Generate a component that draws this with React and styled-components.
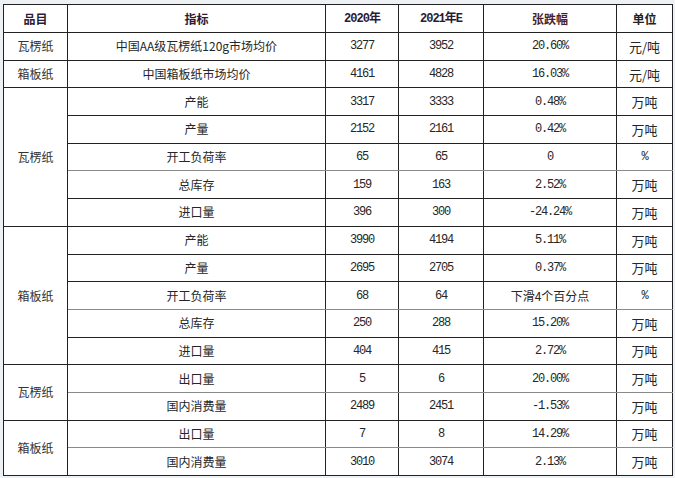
import React from "react";
import styled, { createGlobalStyle } from "styled-components";

const Global = createGlobalStyle`
  html, body { margin: 0; padding: 0; }
  body {
    background: #eef1f4;
    width: 675px;
    height: 478px;
    overflow: hidden;
    font-family: "Noto Sans CJK SC", "Liberation Sans", sans-serif;
  }
`;

const Wrap = styled.div`
  padding: 4px 0 0 3px;
`;

const Table = styled.table`
  border-collapse: collapse;
  table-layout: fixed;
  width: 669px;
  background: #fff;
  border: 1.5px solid #111;
`;

const Th = styled.th`
  height: 27px;
  border: 1px solid #222;
  font-size: 12px;
  font-weight: 700;
  color: ${(p) => p.$color || "#2b1b36"};
  font-family: ${(p) =>
    p.$mono
      ? '"Liberation Mono", "Noto Sans CJK SC", monospace'
      : '"Noto Sans CJK SC", sans-serif'};
  letter-spacing: ${(p) => (p.$mono ? "-1px" : "0")};
  text-align: center;
  padding: 0;
  line-height: 1;
`;

const Td = styled.td`
  height: 26.7px;
  border: 1px solid #222;
  border-bottom-color: ${(p) => (p.$softBottom ? "#8a8a8a" : "#222")};
  text-align: center;
  padding: 0;
  color: #262626;
  line-height: 1;
  font-size: ${(p) => (p.$unit ? "13px" : "12px")};
  font-family: ${(p) =>
    p.$mono
      ? '"Liberation Mono", "Noto Sans CJK SC", monospace'
      : '"Noto Sans CJK SC", sans-serif'};
  letter-spacing: ${(p) => (p.$mono ? "-1.2px" : "0")};
`;

const Group = styled(Td)`
  color: #333;
  font-size: 12px;
`;

const rows = [
  { g: "瓦楞纸", span: 1, name: "中国AA级瓦楞纸120g市场均价", a: "3277", b: "3952", c: "20.60%", u: "元/吨" },
  { g: "箱板纸", span: 1, name: "中国箱板纸市场均价", a: "4161", b: "4828", c: "16.03%", u: "元/吨" },
  { g: "瓦楞纸", span: 5, name: "产能", a: "3317", b: "3333", c: "0.48%", u: "万吨" },
  { name: "产量", a: "2152", b: "2161", c: "0.42%", u: "万吨" },
  { name: "开工负荷率", a: "65", b: "65", c: "0", u: "%", soft: true },
  { name: "总库存", a: "159", b: "163", c: "2.52%", u: "万吨" },
  { name: "进口量", a: "396", b: "300", c: "-24.24%", u: "万吨" },
  { g: "箱板纸", span: 5, name: "产能", a: "3990", b: "4194", c: "5.11%", u: "万吨" },
  { name: "产量", a: "2695", b: "2705", c: "0.37%", u: "万吨" },
  { name: "开工负荷率", a: "68", b: "64", c: "下滑4个百分点", u: "%", soft: true, cjk: true },
  { name: "总库存", a: "250", b: "288", c: "15.20%", u: "万吨" },
  { name: "进口量", a: "404", b: "415", c: "2.72%", u: "万吨" },
  { g: "瓦楞纸", span: 2, name: "出口量", a: "5", b: "6", c: "20.00%", u: "万吨", soft: true },
  { name: "国内消费量", a: "2489", b: "2451", c: "-1.53%", u: "万吨" },
  { g: "箱板纸", span: 2, name: "出口量", a: "7", b: "8", c: "14.29%", u: "万吨", soft: true },
  { name: "国内消费量", a: "3010", b: "3074", c: "2.13%", u: "万吨" },
];

export default function App() {
  return (
    <>
      <Global />
      <Wrap>
        <Table>
          <colgroup>
            <col style={{ width: 64 }} />
            <col style={{ width: 258 }} />
            <col style={{ width: 73 }} />
            <col style={{ width: 85 }} />
            <col style={{ width: 133 }} />
            <col style={{ width: 56 }} />
          </colgroup>
          <thead>
            <tr>
              <Th>品目</Th>
              <Th>指标</Th>
              <Th $mono>2020年</Th>
              <Th $mono>2021年E</Th>
              <Th $color="#4a1e2c">张跌幅</Th>
              <Th $color="#222">单位</Th>
            </tr>
          </thead>
          <tbody>
            {rows.map((r, i) => (
              <tr key={i}>
                {r.g && <Group rowSpan={r.span}>{r.g}</Group>}
                <Td $softBottom={r.soft}>{r.name}</Td>
                <Td $mono $softBottom={r.soft}>{r.a}</Td>
                <Td $mono $softBottom={r.soft}>{r.b}</Td>
                <Td $mono={!r.cjk} $softBottom={r.soft}>{r.c}</Td>
                <Td $unit={r.u !== "%"} $mono={r.u === "%"} $softBottom={r.soft}>
                  {r.u}
                </Td>
              </tr>
            ))}
          </tbody>
        </Table>
      </Wrap>
    </>
  );
}
